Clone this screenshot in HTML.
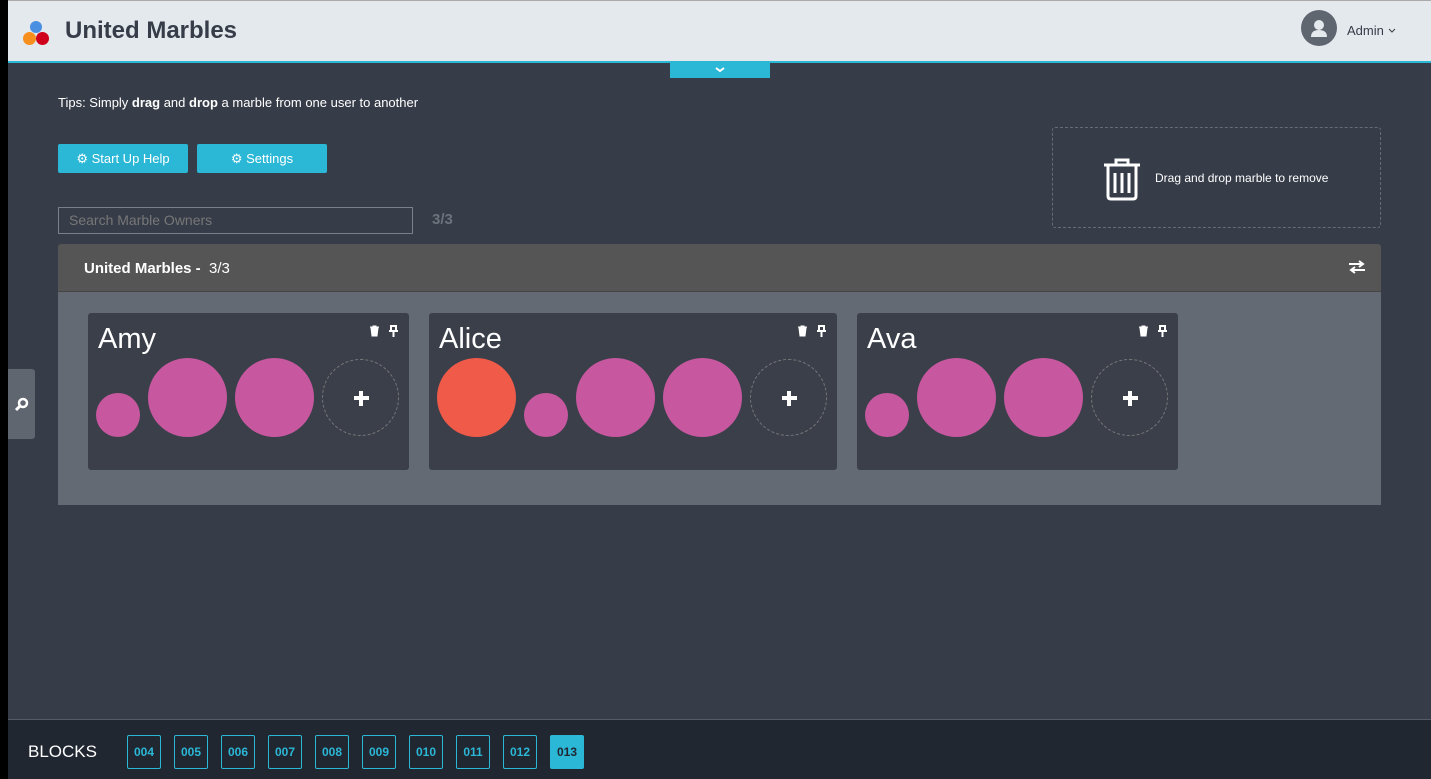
<!DOCTYPE html>
<html><head><style>
*{box-sizing:border-box;margin:0;padding:0}
body{width:1431px;height:779px;overflow:hidden;background:#363c48;font-family:"Liberation Sans",Arial,sans-serif;position:relative}
.abs{position:absolute}
.m{position:absolute;border-radius:50%;background:#c7589f}
.s{width:44px;height:44px;top:80px}
.l{width:79px;height:79px;top:45px}
.plus{position:absolute;width:77px;height:77px;top:46px;border:1px dashed #777;border-radius:50%}
.plus:before{content:"";position:absolute;left:31px;top:36px;width:15px;height:4px;background:#fff}
.plus:after{content:"";position:absolute;left:36px;top:31px;width:4px;height:15px;background:#fff}
.card{position:absolute;top:313px;height:157px;background:#3a3f4a;border-radius:3px}
.card .n{position:absolute;left:10px;top:10px;color:#fff;font-size:29px}
.card .ic{position:absolute;top:12px;right:10px}
.blk{position:absolute;top:735px;width:34px;height:34px;border:1px solid #2bb7d6;color:#2bb7d6;font-size:12px;font-weight:bold;text-align:center;line-height:32px;border-radius:2px}
</style></head><body>
<div class="abs" style="left:0;top:0;width:8px;height:779px;background:#000"></div>
<div class="abs" style="left:8px;top:0;width:1423px;height:61px;background:#e4e9ee;border-top:1px solid #aaa"></div>
<div class="abs" style="left:8px;top:61px;width:1423px;height:2px;background:#2bb7d6"></div>
<div class="abs" style="left:670px;top:61px;width:100px;height:17px;background:#2bb7d6"><svg width="100" height="17"><path d="M46 7l4 3 4-3" stroke="#fff" stroke-width="2" fill="none"/></svg></div>
<div class="abs" style="left:30px;top:21px;width:12px;height:12px;border-radius:50%;background:#4a90e2"></div>
<div class="abs" style="left:23px;top:32px;width:13px;height:13px;border-radius:50%;background:#f78f1e"></div>
<div class="abs" style="left:36px;top:32px;width:13px;height:13px;border-radius:50%;background:#d0021b"></div>
<div class="abs" style="left:65px;top:17px;font-size:24px;font-weight:bold;color:#363c48">United Marbles</div>
<div class="abs" style="left:1301px;top:10px;width:36px;height:36px;border-radius:50%;background:#5f6670"><svg width="36" height="36"><circle cx="18" cy="15" r="5" fill="#e4e9ee"/><path d="M10 27q0-7 8-7t8 7z" fill="#e4e9ee"/></svg></div>
<div class="abs" style="left:1347px;top:23px;font-size:13px;color:#363c48">Admin</div>
<svg class="abs" style="left:1388px;top:28px" width="8" height="5"><path d="M1 1l3 3 3-3" stroke="#363c48" fill="none"/></svg>
<div class="abs" style="left:58px;top:95px;font-size:13px;color:#fff">Tips: Simply <b>drag</b> and <b>drop</b> a marble from one user to another</div>
<div class="abs" style="left:58px;top:144px;width:130px;height:29px;background:#2bb7d6;border-radius:2px;color:#fff;font-size:13px;line-height:29px;text-align:center">&#9881; Start Up Help</div>
<div class="abs" style="left:197px;top:144px;width:130px;height:29px;background:#2bb7d6;border-radius:2px;color:#fff;font-size:13px;line-height:29px;text-align:center">&#9881; Settings</div>
<div class="abs" style="left:58px;top:207px;width:355px;height:27px;border:1px solid #7a808a;color:#777;font-size:14px;line-height:25px;padding-left:10px">Search Marble Owners</div>
<div class="abs" style="left:432px;top:211px;font-size:15px;font-weight:bold;color:#6d737c">3/3</div>
<div class="abs" style="left:1052px;top:127px;width:329px;height:101px;border:1px dashed #666c76;border-radius:3px"></div>
<svg class="abs" style="left:1102px;top:157px" width="40" height="44"><path d="M2 8h36M14 8V3h12v5" stroke="#fff" stroke-width="3" fill="none"/><path d="M6 9v30q0 3 3 3h22q3 0 3-3V9" stroke="#fff" stroke-width="3" fill="none"/><path d="M13 16v20M20 16v20M27 16v20" stroke="#fff" stroke-width="3"/></svg>
<div class="abs" style="left:1155px;top:171px;font-size:12px;color:#fff">Drag and drop marble to remove</div>
<div class="abs" style="left:58px;top:244px;width:1323px;height:48px;background:#555;border-radius:3px 3px 0 0;border-bottom:1px solid #444"></div>
<div class="abs" style="left:84px;top:260px;font-size:15px;color:#fff"><b>United Marbles - </b>&nbsp;3/3</div>
<svg class="abs" style="left:1348px;top:260px" width="18" height="14"><path d="M1 4h14M11 1l4 3-4 3M17 10H3M7 7l-4 3 4 3" stroke="#fff" stroke-width="2" fill="none"/></svg>
<div class="abs" style="left:58px;top:292px;width:1323px;height:213px;background:#636a73"></div>
<div class="abs" style="left:8px;top:369px;width:27px;height:70px;background:#5f6670;border-radius:0 3px 3px 0"><svg width="27" height="70"><circle cx="15" cy="34" r="4" stroke="#fff" stroke-width="2.5" fill="none"/><path d="M12 37l-4 4" stroke="#fff" stroke-width="3"/></svg></div>
<div class="card" style="left:88px;width:321px"><div class="n">Amy</div><svg class="ic" width="30" height="12"><path d="M1 2h9M4 2V1h3v1M2 3h7l-1 8H3z" fill="#fff" stroke="#fff" stroke-width="1"/><path d="M21 1h7M22 1v5h5V1M20 6h9M24.5 6v6" stroke="#fff" stroke-width="2" fill="none"/></svg>
<div class="m s" style="left:8px"></div><div class="m l" style="left:60px"></div><div class="m l" style="left:147px"></div><div class="plus" style="left:234px"></div></div>
<div class="card" style="left:429px;width:408px"><div class="n">Alice</div><svg class="ic" width="30" height="12"><path d="M1 2h9M4 2V1h3v1M2 3h7l-1 8H3z" fill="#fff" stroke="#fff" stroke-width="1"/><path d="M21 1h7M22 1v5h5V1M20 6h9M24.5 6v6" stroke="#fff" stroke-width="2" fill="none"/></svg>
<div class="m l" style="left:8px;background:#f05a49"></div><div class="m s" style="left:95px"></div><div class="m l" style="left:147px"></div><div class="m l" style="left:234px"></div><div class="plus" style="left:321px"></div></div>
<div class="card" style="left:857px;width:321px"><div class="n">Ava</div><svg class="ic" width="30" height="12"><path d="M1 2h9M4 2V1h3v1M2 3h7l-1 8H3z" fill="#fff" stroke="#fff" stroke-width="1"/><path d="M21 1h7M22 1v5h5V1M20 6h9M24.5 6v6" stroke="#fff" stroke-width="2" fill="none"/></svg>
<div class="m s" style="left:8px"></div><div class="m l" style="left:60px"></div><div class="m l" style="left:147px"></div><div class="plus" style="left:234px"></div></div>
<div class="abs" style="left:8px;top:719px;width:1423px;height:60px;background:#212731;border-top:1px solid #555c66"></div>
<div class="abs" style="left:28px;top:742px;font-size:17px;color:#fff">BLOCKS</div>
<div class="blk" style="left:127px">004</div><div class="blk" style="left:174px">005</div><div class="blk" style="left:221px">006</div><div class="blk" style="left:268px">007</div><div class="blk" style="left:315px">008</div><div class="blk" style="left:362px">009</div><div class="blk" style="left:409px">010</div><div class="blk" style="left:456px">011</div><div class="blk" style="left:503px">012</div><div class="blk" style="left:550px;background:#2bb7d6;color:#212731">013</div>
</body></html>
